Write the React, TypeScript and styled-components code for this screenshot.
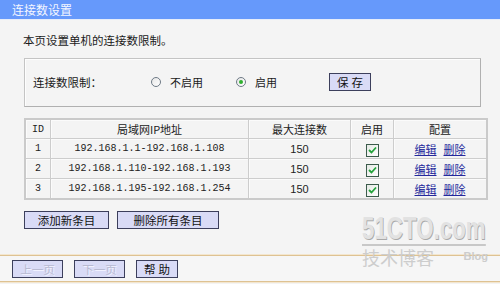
import React from "react";
import styled, { createGlobalStyle } from "styled-components";

const Global = createGlobalStyle`
  html, body { margin: 0; padding: 0; background: #f4f4f4; }
  body { font-family: "Noto Sans CJK SC", "Noto Sans", sans-serif; }
`;

const CJK = `"Noto Sans CJK SC", "Noto Sans", sans-serif`;
const MONO = `"Liberation Mono", "Noto Sans CJK SC", monospace`;

const Page = styled.div`
  position: relative;
  width: 500px;
  height: 284px;
  overflow: hidden;
  background: #f4f4f4;
  display: flex;
  flex-direction: column;
  font-family: ${CJK};
  font-size: 11px;
  color: #1a1a1a;
`;

const Header = styled.div`
  height: 19px;
  line-height: 19px;
  background: #6699fb;
  color: #f4f6ff;
  padding-left: 12px;
  font-size: 12px;
  border-bottom: 1px solid #e6ecfa;
  flex: none;
`;

const Content = styled.div`
  padding: 0 19px 0 24px;
  display: flex;
  flex-direction: column;
`;

const Intro = styled.div`
  margin-top: 12px;
  margin-left: -1px;
  height: 16px;
  line-height: 16px;
  font-size: 11.5px;
`;

const LimitBox = styled.div`
  margin-top: 10px;
  height: 45px;
  border: 1px solid #c4c4c4;
  border-right-color: #b0b0b0;
  border-bottom-color: #b0b0b0;
  box-shadow: inset 1px 1px 0 #fdfdfd;
  display: flex;
  align-items: center;
  padding-left: 8px;
  padding-bottom: 2px;
`;

const Label = styled.span`
  width: 118px;
  font-size: 11.5px;
`;

const RadioGroup = styled.label`
  display: flex;
  align-items: center;
  gap: 9px;
  width: 85px;
  font-size: 11px;
`;

const Radio = styled.span<{ $checked?: boolean }>`
  position: relative;
  width: 10px;
  height: 10px;
  border-radius: 50%;
  border: 1px solid #6e7a86;
  background: linear-gradient(135deg, #e6e6e6, #ffffff);
  box-sizing: border-box;
  &::after {
    content: "";
    display: ${(p) => (p.$checked ? "block" : "none")};
    position: absolute;
    left: 2px;
    top: 2px;
    width: 4px;
    height: 4px;
    border-radius: 50%;
    background: #2fb02f;
  }
`;

const Button = styled.button<{ $w: number; $disabled?: boolean; $ml?: number }>`
  width: ${(p) => p.$w}px;
  height: 18px;
  padding: 0;
  margin-left: ${(p) => p.$ml ?? 0}px;
  background: #d9dbf6;
  border: 1px solid #3c3f5c;
  font-family: ${CJK};
  font-size: 11.5px;
  line-height: 16px;
  color: ${(p) => (p.$disabled ? "#b8bad2" : "#111")};
  text-shadow: ${(p) => (p.$disabled ? "1px 1px 0 #f2f2ff" : "none")};
  cursor: default;
`;

const SpacedButton = styled(Button)`
  letter-spacing: 3px;
  padding-left: 3px;
`;

const Table = styled.table`
  margin-top: 11px;
  width: 457px;
  border-collapse: collapse;
  border: 2px solid #cacaca;
  table-layout: fixed;
`;

const Th = styled.th<{ $w: number; $mono?: boolean }>`
  width: ${(p) => p.$w}px;
  height: 18px;
  padding: 0;
  border: 1px solid #cdcdcd;
  box-shadow: inset 1px 1px 0 #fbfbfb;
  font-weight: normal;
  font-family: ${(p) => (p.$mono ? MONO : CJK)};
  font-size: ${(p) => (p.$mono ? "10px" : "11px")};
  text-align: center;
  color: #222;
`;

const Td = styled.td<{ $mono?: boolean; $sans?: boolean }>`
  height: 19px;
  padding: 0;
  border: 1px solid #cdcdcd;
  box-shadow: inset 1px 1px 0 #fbfbfb;
  text-align: center;
  font-family: ${(p) =>
    p.$mono ? MONO : p.$sans ? `"Liberation Sans", sans-serif` : CJK};
  font-size: ${(p) => (p.$mono ? "10px" : "11px")};
  color: #222;
`;

const Check = styled.span`
  display: inline-flex;
  width: 13px;
  height: 13px;
  box-sizing: border-box;
  border: 1px solid #3b5b4b;
  background: linear-gradient(135deg, #e4e8e4, #ffffff);
  align-items: center;
  justify-content: center;
  vertical-align: middle;
`;

const Links = styled.div`
  display: flex;
  justify-content: center;
  gap: 7px;
`;

const Link = styled.a`
  color: #24299c;
  text-decoration: underline;
  font-size: 11px;
`;

const ButtonRow = styled.div`
  margin-top: 11px;
  display: flex;
  gap: 8px;
`;

const Footer = styled.div`
  margin-top: auto;
  margin-bottom: 2px;
  height: 25px;
  border-top: 1px solid #dec292;
  border-bottom: 1px solid #dec292;
  box-shadow: 0 -1px 0 #f3e6cf, 0 1px 0 #f3e6cf;
  background: #f6f6f6;
  display: flex;
  align-items: center;
  gap: 11px;
  padding-left: 12px;
`;

const Watermark = styled.div`
  position: absolute;
  left: 362px;
  top: 213px;
  width: 126px;
  color: #c6c6c6;
  pointer-events: none;
`;

const WmBig = styled.div`
  font-family: "Liberation Sans", sans-serif;
  font-weight: bold;
  font-size: 31px;
  line-height: 31px;
  transform: scaleX(0.72);
  transform-origin: left;
  white-space: nowrap;
  text-shadow: 1px 1px 0 #a9a9a9;
  color: #e2e2e2;
  border-bottom: 2px solid #c8c8c8;
  width: 172px;
`;

const WmSmall = styled.div`
  display: flex;
  align-items: flex-end;
  justify-content: space-between;
  margin-top: 1px;
`;

const WmCn = styled.span`
  font-family: ${CJK};
  font-size: 18px;
  line-height: 20px;
  color: #cdcdcd;
`;

const WmBlog = styled.span`
  font-family: "Liberation Sans", sans-serif;
  font-weight: bold;
  font-size: 11px;
  color: #cccccc;
  margin-bottom: 5px;
`;

const CheckMark = () => (
  <Check>
    <svg width="9" height="8" viewBox="0 0 9 8">
      <path d="M1 4 L3.5 6.5 L8 1.5" fill="none" stroke="#22a33a" strokeWidth="1.8" />
    </svg>
  </Check>
);

const rows = [
  { id: 1, ip: "192.168.1.1-192.168.1.108" },
  { id: 2, ip: "192.168.1.110-192.168.1.193" },
  { id: 3, ip: "192.168.1.195-192.168.1.254" },
];

export default function App() {
  return (
    <Page>
      <Global />
      <Header>连接数设置</Header>
      <Content>
        <Intro>本页设置单机的连接数限制。</Intro>
        <LimitBox>
          <Label>连接数限制：</Label>
          <RadioGroup>
            <Radio />
            不启用
          </RadioGroup>
          <RadioGroup>
            <Radio $checked />
            启用
          </RadioGroup>
          <SpacedButton $w={42} $ml={8}>保存</SpacedButton>
        </LimitBox>
        <Table>
          <thead>
            <tr>
              <Th $w={24} $mono>ID</Th>
              <Th $w={197}>局域网IP地址</Th>
              <Th $w={101}>最大连接数</Th>
              <Th $w={42}>启用</Th>
              <Th $w={92}>配置</Th>
            </tr>
          </thead>
          <tbody>
            {rows.map((r) => (
              <tr key={r.id}>
                <Td $mono>{r.id}</Td>
                <Td $mono>{r.ip}</Td>
                <Td $sans>150</Td>
                <Td>
                  <CheckMark />
                </Td>
                <Td>
                  <Links>
                    <Link>编辑</Link>
                    <Link>删除</Link>
                  </Links>
                </Td>
              </tr>
            ))}
          </tbody>
        </Table>
        <ButtonRow>
          <Button $w={85}>添加新条目</Button>
          <Button $w={102}>删除所有条目</Button>
        </ButtonRow>
      </Content>
      <Footer>
        <Button $w={51} $disabled>上一页</Button>
        <Button $w={51} $disabled>下一页</Button>
        <SpacedButton $w={42}>帮助</SpacedButton>
      </Footer>
      <Watermark>
        <WmBig>51CTO.com</WmBig>
        <WmSmall>
          <WmCn>技术博客</WmCn>
          <WmBlog>Blog</WmBlog>
        </WmSmall>
      </Watermark>
    </Page>
  );
}
